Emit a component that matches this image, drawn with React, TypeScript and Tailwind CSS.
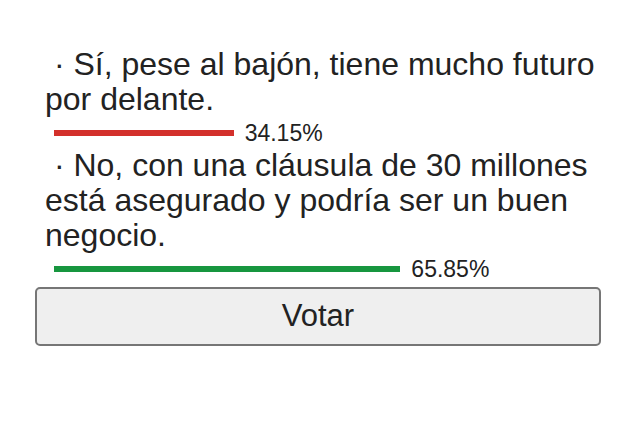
const options = [
  {
    text: "Sí, pese al bajón, tiene mucho futuro por delante.",
    pct: 34.15,
    color: "bg-[#d3302b]",
  },
  {
    text: "No, con una cláusula de 30 millones está asegurado y podría ser un buen negocio.",
    pct: 65.85,
    color: "bg-[#17963f]",
  },
];

export default function App() {
  return (
    <div className="h-[440px] w-[642px] bg-white font-['Liberation_Sans',Arial,sans-serif] text-[#222]">
      <div className="pl-[35px] pr-[41px] pt-[47px]">
        <div className="pl-[10px]">
          {options.map((o) => (
            <div key={o.pct}>
              <p className="text-[32px] leading-[35px]">{`\u00a0·\u00a0${o.text}`}</p>
              {/* result bar + percentage */}
              <div className="flex h-[31px] items-center pl-[9px] pt-[1px]">
                <div
                  className={`h-[6px] ${o.color}`}
                  style={{ width: `${(o.pct / 100) * 526}px` }}
                />
                <span className="ml-[11px] text-[23px] leading-[27px]">
                  {o.pct.toFixed(2)}%
                </span>
              </div>
            </div>
          ))}
        </div>
        <button className="mt-[3px] h-[59px] w-full rounded-[5px] border-2 border-[#767676] bg-[#efefef] text-[31px] text-[#222]">
          Votar
        </button>
      </div>
    </div>
  );
}
